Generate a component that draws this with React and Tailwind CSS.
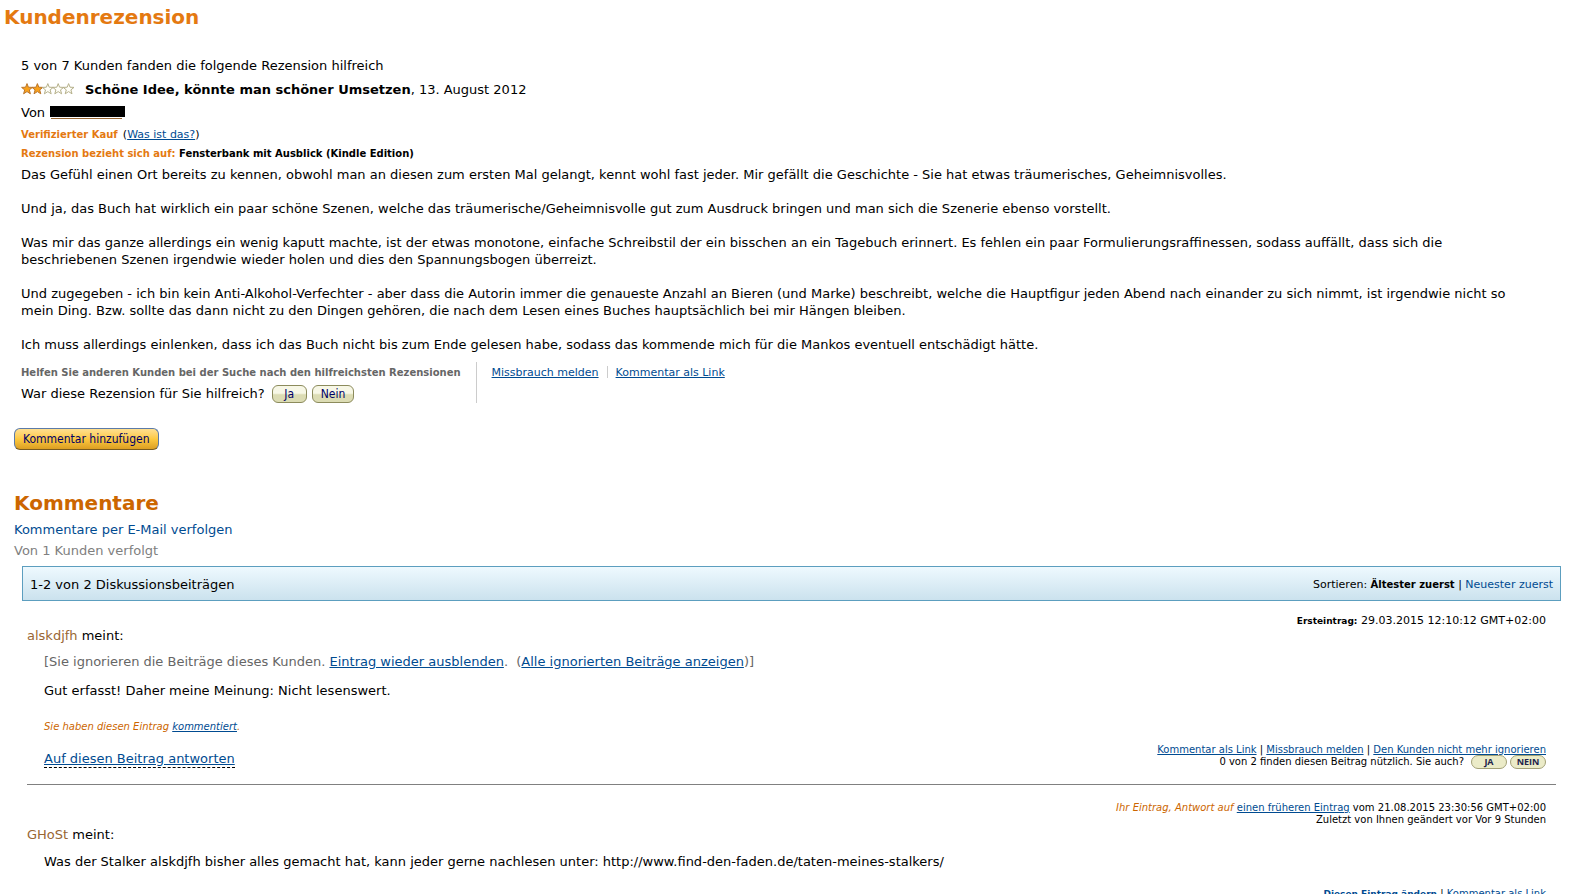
import React from 'react';

const linkClass = 'text-[#004b91] underline';

const reviewParagraphs = [
  'Das Gefühl einen Ort bereits zu kennen, obwohl man an diesen zum ersten Mal gelangt, kennt wohl fast jeder. Mir gefällt die Geschichte - Sie hat etwas träumerisches, Geheimnisvolles.',
  'Und ja, das Buch hat wirklich ein paar schöne Szenen, welche das träumerische/Geheimnisvolle gut zum Ausdruck bringen und man sich die Szenerie ebenso vorstellt.',
  'Was mir das ganze allerdings ein wenig kaputt machte, ist der etwas monotone, einfache Schreibstil der ein bisschen an ein Tagebuch erinnert. Es fehlen ein paar Formulierungsraffinessen, sodass auffällt, dass sich die beschriebenen Szenen irgendwie wieder holen und dies den Spannungsbogen überreizt.',
  'Und zugegeben - ich bin kein Anti-Alkohol-Verfechter - aber dass die Autorin immer die genaueste Anzahl an Bieren (und Marke) beschreibt, welche die Hauptfigur jeden Abend nach einander zu sich nimmt, ist irgendwie nicht so mein Ding. Bzw. sollte das dann nicht zu den Dingen gehören, die nach dem Lesen eines Buches hauptsächlich bei mir Hängen bleiben.',
  'Ich muss allerdings einlenken, dass ich das Buch nicht bis zum Ende gelesen habe, sodass das kommende mich für die Mankos eventuell entschädigt hätte.'
];

const Stars = ({ value }) => (
  <svg className="mb-0.5 h-3 w-[54px] shrink-0" viewBox="0 0 54 12" role="img" aria-label={`${value} von 5 Sternen`}>
    {[0, 1, 2, 3, 4].map((i) => (
      <path
        key={i}
        transform={`translate(${i * 10.4} 0)`}
        d="M6 .6 7.4 4.2 11.4 4.4 8.3 6.9 9.4 10.8 6 8.6 2.6 10.8 3.7 6.9 .6 4.4 4.6 4.2Z"
        fill={i < value ? '#f9a11b' : '#fffef8'}
        stroke={i < value ? '#b9752c' : '#b5b08a'}
        strokeWidth="1"
      />
    ))}
  </svg>
);

const VoteButton = ({ children }) => (
  <button
    type="button"
    className="h-[18px] min-w-[35px] rounded-md border border-[#8c8b5c] bg-linear-to-b from-[#f7f7e6] from-45% to-[#dcdcb4] to-55% px-2 font-['DejaVu_Sans_Condensed','DejaVu_Sans',sans-serif] text-xs leading-4 text-[#000066]"
  >
    {children}
  </button>
);

const SmallVoteButton = ({ children }) => (
  <button
    type="button"
    className="h-3.5 w-9 rounded-full border border-[#a3a177] bg-[#ebebc8] font-['Open_Sans',sans-serif] text-[9px] leading-3 font-bold text-[#22224a]"
  >
    {children}
  </button>
);

const Review = () => (
  <section className="pt-[25px] pr-10 pl-[21px]">
    <p className="leading-5">5 von 7 Kunden fanden die folgende Rezension hilfreich</p>
    <div className="mt-1 flex items-center gap-[10px] leading-5">
      <Stars value={2} />
      <p><b>Schöne Idee, könnte man schöner Umsetzen</b>, 13. August 2012</p>
    </div>
    <div className="mt-[3px] flex items-center gap-[5px] leading-5">
      <span>Von</span>
      <span className="flex h-3.5 w-[75px] flex-col">
        <span className="h-[11px] shrink-0 bg-black" />
        <span className="mt-px mr-[3px] ml-px h-px shrink-0 bg-[#996633]" />
      </span>
    </div>
    <p className="mt-1 text-[10px] leading-4">
      <b className="text-[#e47911]">Verifizierter Kauf</b>{' '}
      <span className="ml-0.5 text-[11px]">(<a href="#kauf" className={linkClass}>Was ist das?</a>)</span>
    </p>
    <p className="mt-[3px] text-[10px] leading-4 font-bold">
      <span className="text-[#e47911]">Rezension bezieht sich auf:</span> Fensterbank mit Ausblick (Kindle Edition)
    </p>
    <div className="mt-1 space-y-[17px] leading-[17px]">
      {reviewParagraphs.map((text) => <p key={text}>{text}</p>)}
    </div>
    <div className="mt-[9px] flex h-[41px]">
      <div className="border-r border-[#cccccc] pr-[15px]">
        <p className="text-[10px] leading-[22px] font-bold text-[#666666]">
          Helfen Sie anderen Kunden bei der Suche nach den hilfreichsten Rezensionen
        </p>
        <div className="flex items-center gap-[5px] leading-5">
          <span className="mr-0.5">War diese Rezension für Sie hilfreich?</span>
          <VoteButton>Ja</VoteButton>
          <VoteButton>Nein</VoteButton>
        </div>
      </div>
      <div className="flex items-start pl-[15px] text-[11px] leading-[22px]">
        <a href="#missbrauch" className={linkClass}>Missbrauch melden</a>
        <span className="mx-2 mt-1 h-3 w-px bg-[#cccccc]" />
        <a href="#link" className={linkClass}>Kommentar als Link</a>
      </div>
    </div>
  </section>
);

const SortBar = () => (
  <div className="ml-2 flex h-[35px] items-center justify-between border border-[#5c9ebf] bg-linear-to-b from-[#eef9fe] to-[#cbe2ee] px-[7px] pt-0.5">
    <span>1-2 von 2 Diskussionsbeiträgen</span>
    <span className="pt-0.5 text-[11px]">
      Sortieren: <b className="text-[10px]">Ältester zuerst</b> | <a href="#neu" className="text-[#004b91]">Neuester zuerst</a>
    </span>
  </div>
);

const Comments = () => (
  <section className="pr-[10px] pl-[14px]">
    <h2 className="mt-[38px] mb-px text-xl leading-[30px] font-bold text-[#cc6600]">Kommentare</h2>
    <p className="leading-[21px]">
      <a href="#verfolgen" className="text-[#004b91]">Kommentare per E-Mail verfolgen</a>
    </p>
    <p className="leading-[21px] text-[#808080]">Von 1 Kunden verfolgt</p>
    <div className="mt-[5px]">
      <SortBar />
    </div>

    <article className="mr-[5px] ml-[13px] border-b border-[#808080] pr-[10px] pb-4">
      <p className="mt-[13px] text-right text-[11px] leading-[14px]">
        <b className="text-[9px]">Ersteintrag:</b> 29.03.2015 12:10:12 GMT+02:00
      </p>
      <p className="leading-4"><a href="#alskdjfh" className="text-[#996633]">alskdjfh</a> meint:</p>
      <div className="pl-[17px]">
        <p className="mt-2 leading-5 text-[#666666]">
          [Sie ignorieren die Beiträge dieses Kunden. <a href="#ausblenden" className={linkClass}>Eintrag wieder ausblenden</a>.&nbsp;{' '}
          (<a href="#alle" className={linkClass}>Alle ignorierten Beiträge anzeigen</a>)]
        </p>
        <p className="mt-[9px] leading-5">Gut erfasst! Daher meine Meinung: Nicht lesenswert.</p>
        <p className="mt-[18px] text-[10px] leading-4 text-[#cc6600] italic">
          Sie haben diesen Eintrag <a href="#kommentiert" className={linkClass}>kommentiert</a>.
        </p>
        <div className="mt-2 flex items-center justify-between">
          <a href="#antworten" className={`${linkClass} mt-2 border-b border-dashed border-black leading-4`}>
            Auf diesen Beitrag antworten
          </a>
          <div className="text-right text-[10px] leading-3">
            <p>
              <a href="#link-1" className={linkClass}>Kommentar als Link</a> | <a href="#missbrauch-1" className={linkClass}>Missbrauch melden</a> | <a href="#ignorieren" className={linkClass}>Den Kunden nicht mehr ignorieren</a>
            </p>
            <div className="flex h-3 items-center justify-end gap-[3px]">
              <span className="mr-1">0 von 2 finden diesen Beitrag nützlich. Sie auch?</span>
              <SmallVoteButton>JA</SmallVoteButton>
              <SmallVoteButton>NEIN</SmallVoteButton>
            </div>
          </div>
        </div>
      </div>
    </article>

    <article className="mr-[5px] ml-[13px] pr-[10px]">
      <div className="mt-[17px] text-right text-[10px] leading-3">
        <p>
          <i className="text-[#cc6600]">Ihr Eintrag, Antwort auf</i> <a href="#frueher" className={linkClass}>einen früheren Eintrag</a> vom 21.08.2015 23:30:56 GMT+02:00
        </p>
        <p>Zuletzt von Ihnen geändert vor Vor 9 Stunden</p>
      </div>
      <p className="mt-px leading-4"><a href="#ghost" className="text-[#996633]">GHoSt</a> meint:</p>
      <p className="mt-[9px] pl-[17px] leading-5">
        Was der Stalker alskdjfh bisher alles gemacht hat, kann jeder gerne nachlesen unter: http://www.find-den-faden.de/taten-meines-stalkers/
      </p>
      <p className="mt-4 text-right text-[10px] leading-3">
        <a href="#aendern" className="text-[9px] font-bold text-[#004b91] underline">Diesen Eintrag ändern</a> | <a href="#link-2" className={linkClass}>Kommentar als Link</a>
      </p>
    </article>
  </section>
);

const App = () => (
  <main className="h-screen overflow-hidden bg-white font-['DejaVu_Sans',Verdana,sans-serif] text-[13px] text-black">
    <h1 className="px-1 pt-[3px] text-xl leading-7 font-bold text-[#e47911]">Kundenrezension</h1>
    <Review />
    <div className="mt-[25px] px-[14px]">
      <button
        type="button"
        className="block h-[22px] rounded-md border border-[#5c7ba8] border-b-[#7a5c1e] bg-linear-to-b from-[#ffdf8f] via-[#fdc93f] to-[#dc9f22] px-2 font-['DejaVu_Sans_Condensed','DejaVu_Sans',sans-serif] text-xs leading-5 text-[#000066]"
      >
        Kommentar hinzufügen
      </button>
    </div>
    <Comments />
  </main>
);

export default App;
